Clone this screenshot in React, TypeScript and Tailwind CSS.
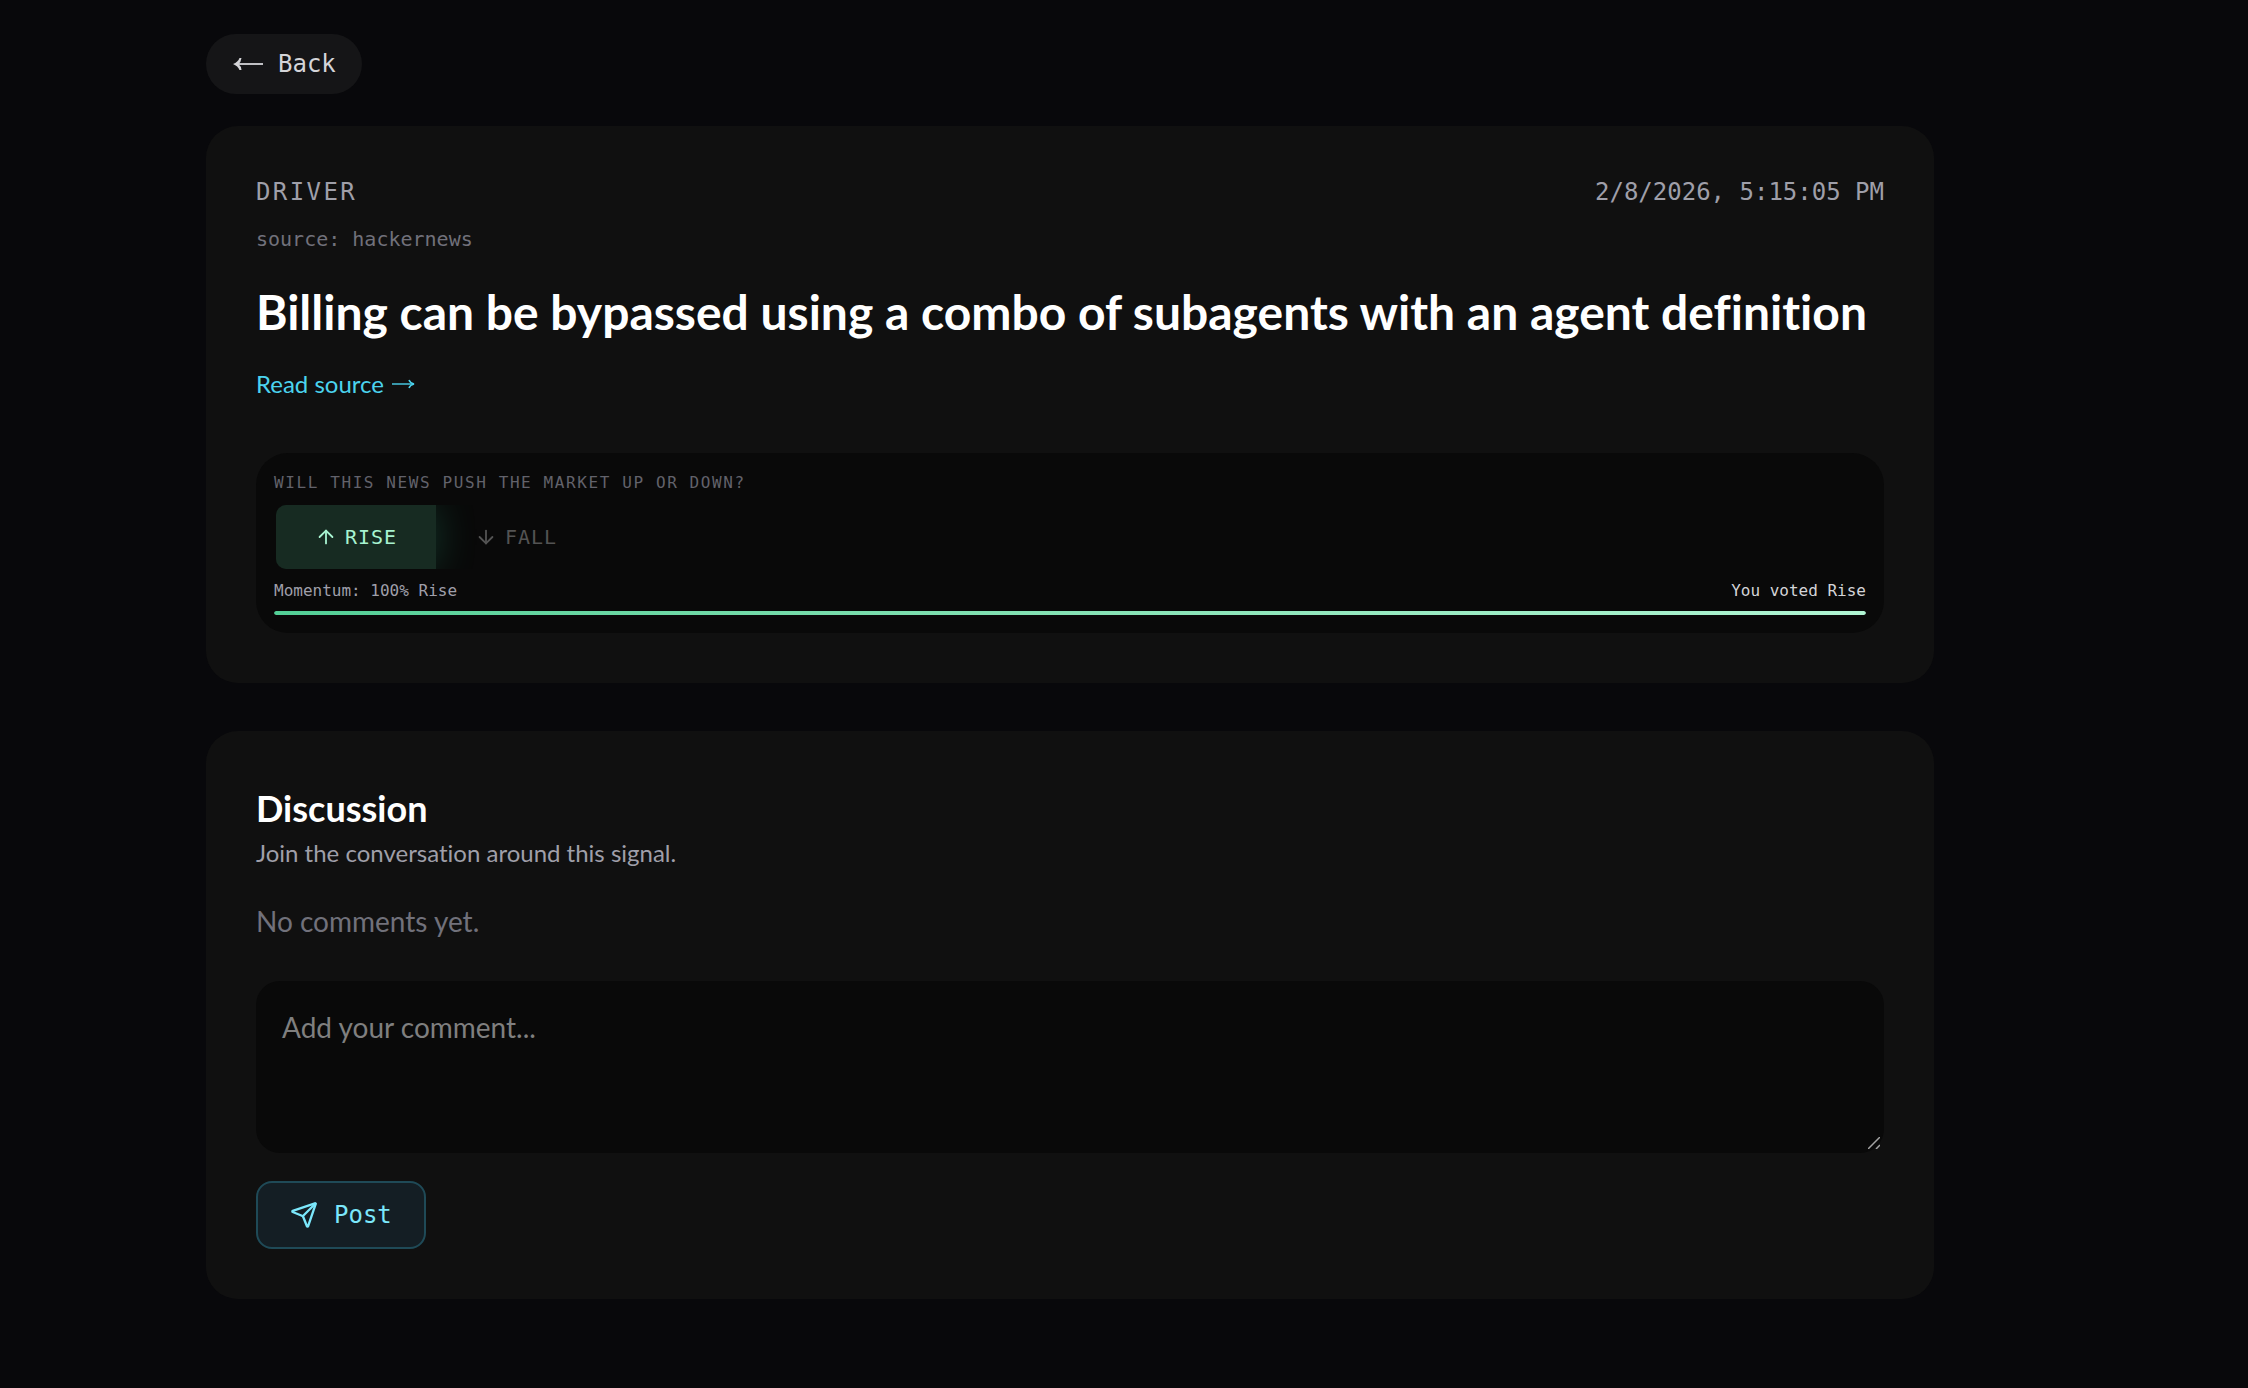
import { useState } from "react";
import type { FormEvent } from "react";
import { ArrowDown, ArrowUp, Send } from "lucide-react";
import clsx from "clsx";

interface Signal {
  kind: string;
  source: string;
  title: string;
  createdAt: string;
}

const signal: Signal = {
  kind: "Driver",
  source: "hackernews",
  title: "Billing can be bypassed using a combo of subagents with an agent definition",
  createdAt: "2/8/2026, 5:15:05 PM",
};

type Vote = "rise" | "fall";

function LongArrowLeft() {
  return (
    <svg width="34" height="16" viewBox="0 0 34 16" fill="none" aria-hidden="true">
      <path d="M5 8H31" stroke="currentColor" strokeWidth="1.8" />
      <path d="M1 8Q6 6 7.500 2H9.500Q9 6 6.500 8Q9 10 9.500 14H7.500Q6 10 1 8Z" fill="currentColor" />
    </svg>
  );
}

function LongArrowRight() {
  return (
    <svg width="24" height="12" viewBox="0 0 24 12" fill="none" aria-hidden="true">
      <path d="M0 6H21" stroke="currentColor" strokeWidth="1.4" />
      <path d="M17 2Q18 5 22 6Q18 7 17 10" stroke="currentColor" strokeWidth="1.5" />
    </svg>
  );
}

function VotePanel() {
  const [vote, setVote] = useState<Vote>("rise");
  const momentum = vote === "rise" ? 100 : 0;

  return (
    <div className="mt-[51px] rounded-[32px] bg-[#090909] p-[18px] font-['DejaVu_Sans_Mono',monospace]">
      <p className="text-base leading-6 tracking-widest text-[#62626b] uppercase">
        Will this news push the market up or down?
      </p>
      <div className="mt-2 flex w-fit overflow-hidden rounded-xl border-2 border-transparent text-xl tracking-wider">
        <button
          type="button"
          onClick={() => setVote("rise")}
          className={clsx(
            "flex h-16 w-40 items-center justify-center gap-2",
            vote === "rise"
              ? "bg-[#172b22] text-[#a7f3d0] shadow-[0_0_40px_rgba(52,211,153,0.22)]"
              : "text-[#535353]"
          )}
        >
          <ArrowUp size={22} />
          RISE
        </button>
        <button
          type="button"
          onClick={() => setVote("fall")}
          className={clsx(
            "flex h-16 w-40 items-center justify-center gap-2",
            vote === "fall" ? "bg-[#2b1719] text-[#fecdd3]" : "text-[#535353]"
          )}
        >
          <ArrowDown size={22} />
          FALL
        </button>
      </div>
      <div className="mt-2 flex justify-between text-base leading-6">
        <span className="text-[#9f9fa9]">Momentum: {momentum}% Rise</span>
        <span className="text-[#d4d4d8]">You voted {vote === "rise" ? "Rise" : "Fall"}</span>
      </div>
      <div className="mt-2 h-1 overflow-hidden rounded-full bg-[#1b1b1b]">
        <div
          className="h-full rounded-full bg-linear-to-r from-[#52cf96] to-[#b0f5d3]"
          style={{ width: `${momentum}%` }}
        />
      </div>
    </div>
  );
}

function Discussion() {
  const [comment, setComment] = useState("");

  const handleSubmit = (event: FormEvent) => {
    event.preventDefault();
    setComment("");
  };

  return (
    <section className="mt-12 rounded-[32px] bg-[#101010] p-[50px]">
      <h2 className="text-4xl leading-[54px] font-bold text-white">Discussion</h2>
      <p className="text-2xl leading-9 text-[#9f9fa9]">Join the conversation around this signal.</p>
      <p className="mt-[30px] text-[28px] leading-10 text-[#71717b]">No comments yet.</p>
      <form className="mt-10" onSubmit={handleSubmit}>
        <div className="relative">
          <textarea
            aria-label="Add your comment"
            placeholder="Add your comment..."
            value={comment}
            onChange={(event) => setComment(event.target.value)}
            className="block h-[172px] w-full resize-none rounded-3xl bg-[#090909] p-[26px] text-[28px] leading-10 text-white outline-none placeholder:text-[#7f7f7f]"
          />
          <svg
            className="pointer-events-none absolute right-1 bottom-1 text-[#a3a3a3]"
            width="12"
            height="12"
            viewBox="0 0 12 12"
            aria-hidden="true"
          >
            <path d="M0 12L12 0M8 12L12 8" stroke="currentColor" strokeWidth="1.5" />
          </svg>
        </div>
        <button
          type="submit"
          className="mt-7 flex h-17 items-center gap-4 rounded-2xl border-2 border-[#1f4a57] bg-[#141e24] px-8 font-['DejaVu_Sans_Mono',monospace] text-2xl text-[#7be7fb]"
        >
          <Send size={28} />
          Post
        </button>
      </form>
    </section>
  );
}

export default function App() {
  return (
    <div className="min-h-screen bg-[#08080b] pt-[34px] pr-[314px] pb-[89px] pl-[206px] font-['Lato',sans-serif] [font-variant-ligatures:none]">
      <button
        type="button"
        className="flex h-15 items-center gap-3 rounded-full bg-[#151517] px-[26px] font-['DejaVu_Sans_Mono',monospace] text-2xl text-[#d4d4d8]"
      >
        <LongArrowLeft />
        Back
      </button>

      <main className="mt-8">
        <article className="rounded-[32px] bg-[#101010] p-[50px]">
          <div className="flex justify-between font-['DejaVu_Sans_Mono',monospace] text-2xl leading-8 text-[#9f9fa9]">
            <span className="tracking-widest uppercase">{signal.kind}</span>
            <time>{signal.createdAt}</time>
          </div>
          <p className="mt-4 font-['DejaVu_Sans_Mono',monospace] text-xl leading-[30px] text-[#71717b]">
            source: {signal.source}
          </p>
          <h1 className="mt-7 text-5xl leading-[60px] font-bold text-white">{signal.title}</h1>
          <a href="#source" className="mt-6 flex w-fit items-center gap-2 text-2xl leading-9 text-[#4bd3ee]">
            Read source
            <LongArrowRight />
          </a>
          <VotePanel />
        </article>

        <Discussion />
      </main>
    </div>
  );
}
